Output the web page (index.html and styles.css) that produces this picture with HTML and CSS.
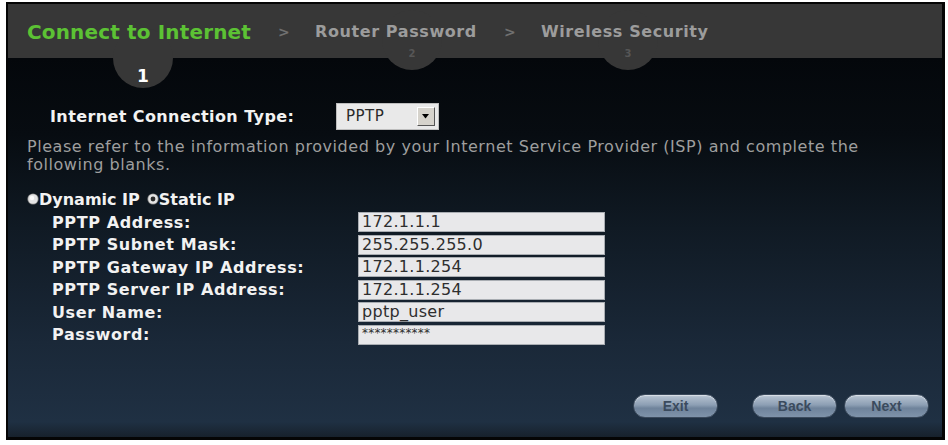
FILE: index.html
```html
<!DOCTYPE html>
<html>
<head>
<meta charset="utf-8">
<link rel="stylesheet" href="styles.css">
</head>
<body>
<div class="frame">
  <div class="header">
    <div class="tab active"><span class="tab-title">Connect to Internet</span><span class="step step-one">1</span></div>
    <span class="sep">&gt;</span>
    <div class="tab"><span class="tab-title">Router Password</span><span class="step step-two">2</span></div>
    <span class="sep">&gt;</span>
    <div class="tab"><span class="tab-title">Wireless Security</span><span class="step step-three">3</span></div>
  </div>
  <div class="content">
    <div class="type-row">
      <span class="type-label">Internet Connection Type:</span>
      <div class="select"><span class="select-value">PPTP</span><span class="select-btn"><svg width="8" height="5" viewBox="0 0 8 5"><path d="M0 0H7L3.5 4.5Z" fill="#000"/></svg></span></div>
    </div>
    <p class="intro">Please refer to the information provided by your Internet Service Provider (ISP) and complete the following blanks.</p>
    <div class="radios">
      <span class="radio"><svg class="radio-icon" width="12" height="12" viewBox="0 0 12 12"><circle cx="6" cy="6" r="5.6" fill="#8a8a8a"/><circle cx="6" cy="6" r="4.8" fill="#e4e4e4"/><circle cx="5" cy="5" r="2.2" fill="#fafafa"/></svg>Dynamic IP</span>
      <span class="radio"><svg class="radio-icon" width="12" height="12" viewBox="0 0 12 12"><circle cx="6" cy="6" r="5.6" fill="#8a8a8a"/><circle cx="6" cy="6" r="4.8" fill="#e4e4e4"/><circle cx="6" cy="6" r="2.4" fill="#2a2a2a"/></svg>Static IP</span>
    </div>
    <div class="fields">
      <span class="f-label">PPTP Address:</span><div class="f-input">172.1.1.1</div>
      <span class="f-label">PPTP Subnet Mask:</span><div class="f-input">255.255.255.0</div>
      <span class="f-label">PPTP Gateway IP Address:</span><div class="f-input">172.1.1.254</div>
      <span class="f-label">PPTP Server IP Address:</span><div class="f-input">172.1.1.254</div>
      <span class="f-label">User Name:</span><div class="f-input">pptp_user</div>
      <span class="f-label">Password:</span><div class="f-input pw">***********</div>
    </div>
    <div class="buttons">
      <span class="btn">Exit</span>
      <span class="btn btn-back">Back</span>
      <span class="btn">Next</span>
    </div>
  </div>
</div>
</body>
</html>
```
FILE: styles.css
```css
* { box-sizing: border-box; }
html, body { margin: 0; padding: 0; background: #fff; }
body { font-family: "DejaVu Sans", "Liberation Sans", sans-serif; }

.frame {
  margin: 2px 0 0 6px;
  width: 939px;
  height: 438px;
  background: #050505;
  border: 2px solid #050505;
  border-right-width: 3px;
  border-bottom-width: 3px;
  display: flex;
  flex-direction: column;
  overflow: hidden;
}

.header {
  height: 54px;
  background: #373737;
  display: flex;
  align-items: stretch;
  padding-left: 19px;
  gap: 27px;
  position: relative;
  z-index: 1;
}

.tab {
  position: relative;
  display: flex;
  align-items: center;
  padding-top: 1px;
}
.tab-title {
  font-weight: bold;
  font-size: 16px;
  letter-spacing: 0.6px;
  color: #9c9c9c;
  position: relative;
  z-index: 2;
}
.tab.active .tab-title {
  font-size: 20px;
  letter-spacing: 0.15px;
  color: #5cc234;
}
.sep {
  display: flex;
  align-items: center;
  padding-top: 1px;
  color: #707070;
  font-size: 14px;
  font-weight: bold;
  width: 10px;
}

.step {
  position: absolute;
  width: 60px;
  height: 60px;
  border-radius: 50%;
  background: #373737;
  display: flex;
  justify-content: center;
  font-weight: bold;
  z-index: 1;
}
.step-one {
  left: 86px;
  top: 24px;
  padding-top: 38px;
  font-size: 17px;
  line-height: 20px;
  color: #fff;
}
.step-two {
  left: 67px;
  top: 6px;
  padding-top: 38px;
  font-size: 10px;
  line-height: 12px;
  color: #565656;
}
.step-three {
  left: 57px;
  top: 6px;
  padding-top: 38px;
  font-size: 10px;
  line-height: 12px;
  color: #565656;
}

.content {
  flex: 1;
  background: linear-gradient(to bottom, #04070b 0%, #070c11 20%, #101a24 45%, #1a2838 75%, #1f3043 96%, #17212c 100%);
  padding: 44px 0 0 19px;
  color: #fff;
  display: flex;
  flex-direction: column;
}

.type-row {
  display: flex;
  align-items: center;
  padding-left: 23px;
  height: 28px;
}
.type-label {
  width: 286px;
  font-weight: bold;
  font-size: 16px;
  letter-spacing: 0.4px;
  color: #f2f2f2;
}
.select {
  width: 103px;
  height: 27px;
  background: #e9e9e9;
  border: 1px solid #bdbdbd;
  display: flex;
  align-items: center;
  justify-content: space-between;
  padding: 0 3px 0 9px;
}
.select-value {
  color: #2a2a2a;
  font-size: 15px;
  letter-spacing: 0.5px;
}
.select-btn {
  width: 18px;
  height: 19px;
  background: #d6d3cc;
  border: 1px solid #fff;
  border-right-color: #555;
  border-bottom-color: #555;
  display: flex;
  align-items: center;
  justify-content: center;
}

.intro {
  margin: 8px 0 0 0;
  width: 850px;
  font-size: 16px;
  line-height: 18px;
  color: #9e9e9e;
  letter-spacing: 0.55px;
}

.radios {
  display: flex;
  gap: 7px;
  margin-top: 15px;
  height: 20px;
  align-items: center;
}
.radio {
  display: flex;
  align-items: center;
  font-weight: bold;
  font-size: 16px;
  letter-spacing: 0;
  color: #f2f2f2;
}
.radio-icon {
  flex-shrink: 0;
  display: block;
}

.fields {
  display: grid;
  grid-template-columns: 306px 247px;
  grid-auto-rows: 20px;
  row-gap: 2.6px;
  align-items: center;
  padding-left: 25px;
  margin-top: 3px;
}
.f-label {
  font-weight: bold;
  font-size: 16px;
  letter-spacing: 0.6px;
  color: #f2f2f2;
}
.f-input {
  height: 20px;
  background: #e8e8ea;
  border: 1px solid #a9adb2;
  color: #2e2e2e;
  font-size: 16px;
  line-height: 18px;
  padding-left: 3px;
  letter-spacing: 0.3px;
}
.f-input.pw {
  font-size: 12px;
  letter-spacing: 0.2px;
  line-height: 14px;
}

.buttons {
  display: flex;
  justify-content: flex-end;
  padding-right: 13px;
  margin-top: 49px;
}
.btn {
  width: 85px;
  height: 24px;
  border-radius: 12px;
  background: linear-gradient(to bottom, #b8c4d2 0%, #8d9fb4 45%, #6f839b 60%, #7f93aa 100%);
  border: 1px solid #3b4a5c;
  box-shadow: inset 0 1px 1px rgba(255,255,255,0.5);
  color: #3b4b5e;
  font-family: "Liberation Sans", sans-serif;
  font-weight: bold;
  font-size: 14px;
  display: flex;
  align-items: center;
  justify-content: center;
  margin-left: 7px;
}
.btn-back { margin-left: 34px; }
```
